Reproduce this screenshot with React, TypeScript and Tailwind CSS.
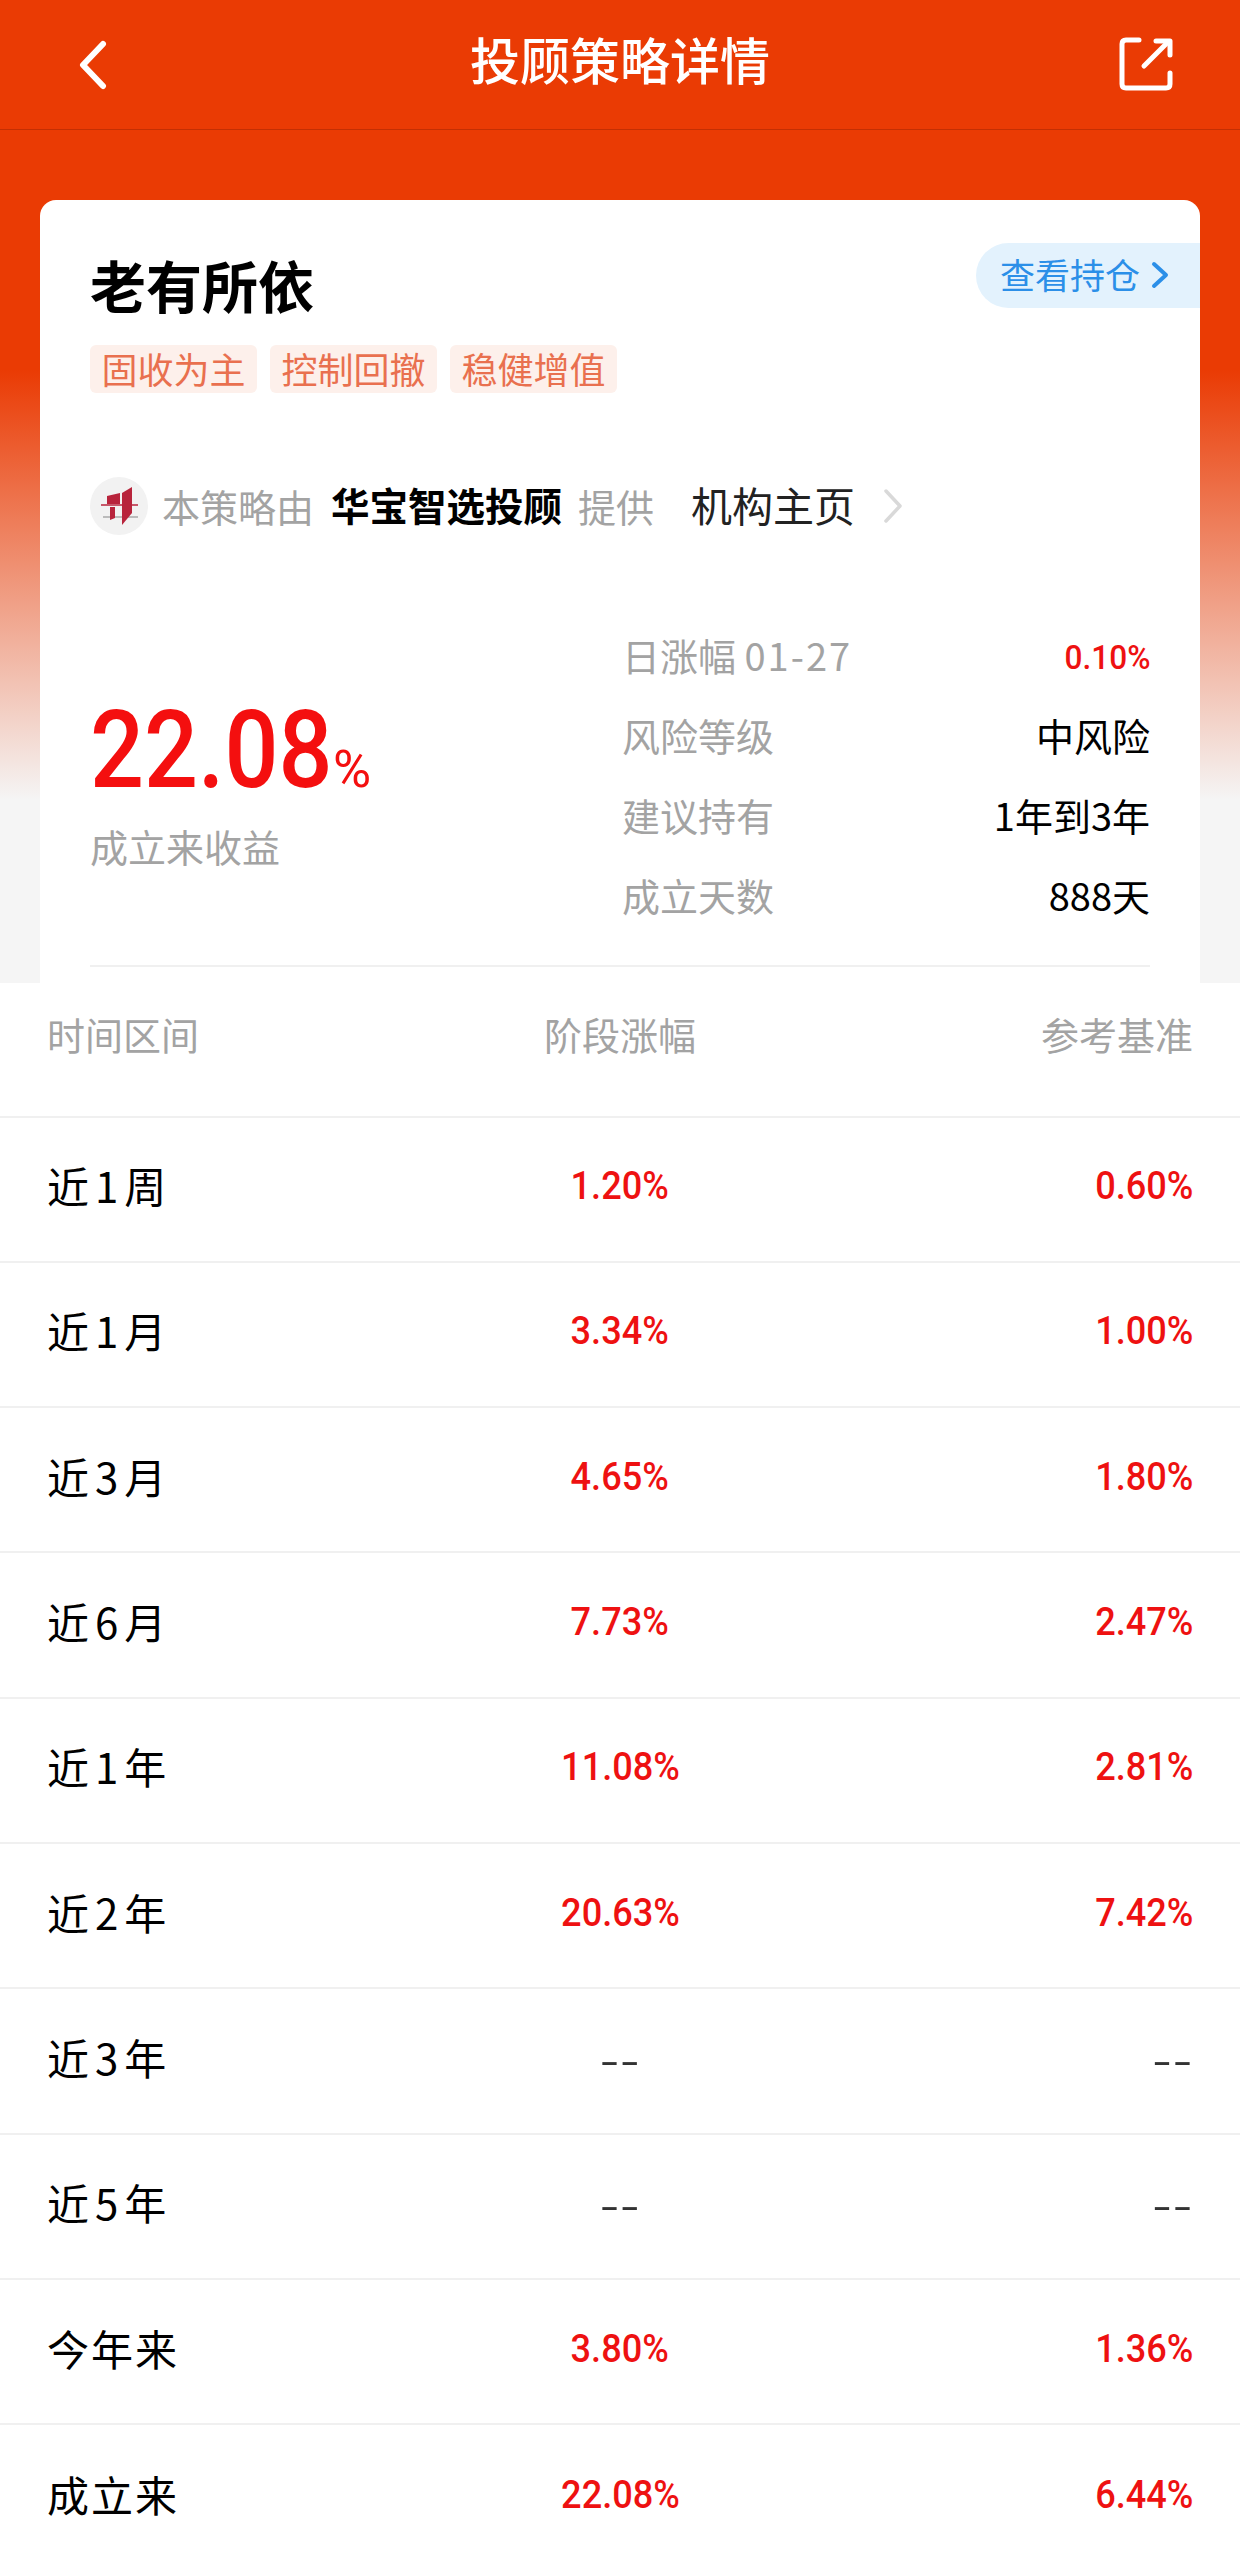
const rows = [
  ["近1周", "1.20%", "0.60%"],
  ["近1月", "3.34%", "1.00%"],
  ["近3月", "4.65%", "1.80%"],
  ["近6月", "7.73%", "2.47%"],
  ["近1年", "11.08%", "2.81%"],
  ["近2年", "20.63%", "7.42%"],
  ["近3年", "--", "--"],
  ["近5年", "--", "--"],
  ["今年来", "3.80%", "1.36%"],
  ["成立来", "22.08%", "6.44%"],
];

const tags = ["固收为主", "控制回撤", "稳健增值"];

const Num = ({ children, origin }: { children: string; origin: string }) => {
  if (children === "--") {
    return <span className="inline-block pb-[6px] text-[58px] leading-none font-light tracking-[1px] text-[#333]">--</span>;
  }
  return (
    <span
      className={`inline-block font-['Roboto',sans-serif] text-[38px] leading-none font-medium text-[#ee1111] scale-x-[0.95] ${origin}`}
    >
      {children}
    </span>
  );
};

// digits in the period labels sit a little apart from the characters
const PeriodLabel = ({ text }: { text: string }) => (
  <span className="pb-[9px] text-[42px] tracking-[2px] text-black">
    {text.split(/(\d)/).map((part, i) =>
      /\d/.test(part) ? (
        <span key={i} className="mx-[4px]">
          {part}
        </span>
      ) : (
        part
      ),
    )}
  </span>
);

const Header = () => (
  <header className="flex h-[130px] items-center justify-between border-b border-[#c42f03] bg-[#ea3b04] pr-[66px] pl-[78px]">
    <svg width="30" height="50" viewBox="0 0 30 50" fill="none" stroke="#fff" strokeWidth="6" strokeLinecap="round" strokeLinejoin="round">
      <path d="M25 4 L5 25 L25 46" />
    </svg>
    <h1 className="mb-[12px] ml-[14px] text-[50px] font-medium text-white">投顾策略详情</h1>
    <svg className="mb-[2px]" width="56" height="56" viewBox="0 0 56 56" fill="none" stroke="#fff" strokeWidth="5" strokeLinecap="round" strokeLinejoin="round">
      <path d="M21 4 H8 Q4 4 4 8 V48 Q4 52 8 52 H48 Q52 52 52 48 V37" />
      <path d="M26 30 L50 6" />
      <path d="M38 5 H52 V19" />
    </svg>
  </header>
);

const StatRow = ({ label, value }: { label: string; value: string }) => (
  <div className="flex h-[80px] items-center justify-between">
    <span className="text-[#a3a3a3]">{label}</span>
    <span className="text-black">{value}</span>
  </div>
);

const Card = () => (
  <section className="mx-[40px] mt-[70px] h-[783px] overflow-hidden rounded-t-[16px] bg-white pt-[43px]">
    <div className="flex items-start justify-between pl-[50px]">
      <h2 className="mt-[3px] mb-[3px] text-[56px] leading-[76px] font-bold text-black">老有所依</h2>
      <div className="flex h-[65px] w-[224px] items-center gap-[10px] rounded-l-[33px] bg-[#e3f2fd] pb-[2px] pl-[24px] text-[35px] text-[#2b8fe8]">
        查看持仓
        <svg width="20" height="30" viewBox="0 0 20 30" fill="none" stroke="#2b8fe8" strokeWidth="4" strokeLinecap="round" strokeLinejoin="round">
          <path d="M4 4 L16 15 L4 26" />
        </svg>
      </div>
    </div>

    <div className="mt-[20px] flex gap-[13px] pl-[50px]">
      {tags.map((t) => (
        <span key={t} className="flex h-[48px] w-[167px] items-center justify-center rounded-[6px] bg-[#fdf0eb] pb-[2px] text-[36px] leading-none text-[#e9704f]">
          {t}
        </span>
      ))}
    </div>

    <div className="mt-[83px] flex h-[60px] items-center pl-[50px] text-[38px]">
      <div className="flex h-[58px] w-[58px] items-center justify-center rounded-full bg-[#f2f2f2]">
        <svg width="58" height="58" viewBox="0 0 58 58" fill="none">
          <path d="M11 28 H48" stroke="#b8243c" strokeWidth="1.5" />
          <path d="M13 40 H48" stroke="#a9a9a9" strokeWidth="1.5" />
          <path d="M17 19 L30 16 V27 H17 Z" fill="#b8243c" />
          <path d="M20 30 H25 V41 L20 43 Z" fill="#b8243c" />
          <path d="M32 16 L42 10 V36 L32 48 Z" fill="#b8243c" />
        </svg>
      </div>
      <span className="ml-[14px] pb-[2px] text-[#a3a3a3]">本策略由</span>
      <span className="ml-[17px] pb-[2px] text-[38.5px] font-bold text-black">华宝智选投顾</span>
      <span className="ml-[16px] pb-[2px] text-[#a3a3a3]">提供</span>
      <span className="ml-[37px] pb-[2px] text-[41px] text-[#222]">机构主页</span>
      <svg className="ml-[28px]" width="20" height="36" viewBox="0 0 20 36" fill="none" stroke="#d9d9d9" strokeWidth="3.5" strokeLinecap="round" strokeLinejoin="round">
        <path d="M3 3 L17 18 L3 33" />
      </svg>
    </div>

    <div className="mx-[50px] mt-[78px] flex border-b-2 border-[#f0f0f0] pb-[31px] text-[38px]">
      <div className="w-[532px] pt-[82px]">
        <div className="flex items-baseline font-['Roboto',sans-serif] leading-none text-[#f40f0f]">
          <span className="w-[243px] origin-left scale-x-[0.88] text-[108px] font-medium">22.08</span>
          <span className="text-[52px]">%</span>
        </div>
        <div className="mt-[14px] leading-[56px] text-[#a3a3a3]">成立来收益</div>
      </div>
      <div className="flex-1">
        <div className="flex h-[80px] items-center justify-between">
          <span className="text-[#a3a3a3]">
            日涨幅 <span className="tracking-[2px]">01-27</span>
          </span>
          <span className="mt-[6px] inline-block origin-right scale-x-[0.93] font-['Roboto',sans-serif] text-[34px] leading-none font-medium text-[#ee1111]">
            0.10%
          </span>
        </div>
        <StatRow label="风险等级" value="中风险" />
        <StatRow label="建议持有" value="1年到3年" />
        <StatRow label="成立天数" value="888天" />
      </div>
    </div>
  </section>
);

const Table = () => (
  <section className="bg-white">
    <div className="grid h-[134.5px] grid-cols-3 items-center border-b-2 border-[#f0f0f0] px-[47px] pb-[31px] text-[38px] text-[#a3a3a3]">
      <span>时间区间</span>
      <span className="text-center">阶段涨幅</span>
      <span className="text-right">参考基准</span>
    </div>
    {rows.map(([label, period, base]) => (
      <div key={label} className="grid h-[145.3px] grid-cols-3 items-center border-b-2 border-[#f0f0f0] px-[47px] last:border-b-0">
        <PeriodLabel text={label} />
        <span className="pb-[6px] text-center">
          <Num origin="origin-center">{period}</Num>
        </span>
        <span className="pb-[6px] text-right">
          <Num origin="origin-right">{base}</Num>
        </span>
      </div>
    ))}
  </section>
);

export default function App() {
  return (
    <div className="h-[2562px] overflow-hidden bg-white font-['Noto_Sans_CJK_SC',sans-serif]">
      <div className="h-[983px] overflow-hidden bg-[linear-gradient(180deg,#ea3b04_0px,#ea3b04_370px,#f5f5f5_800px)]">
        <Header />
        <Card />
      </div>
      <Table />
    </div>
  );
}
